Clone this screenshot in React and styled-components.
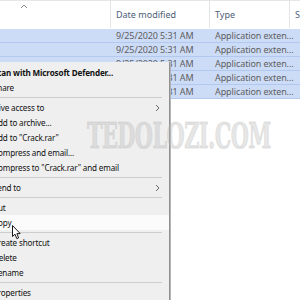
import React from "react";
import styled, { createGlobalStyle } from "styled-components";

const Global = createGlobalStyle`
  html, body {
    margin: 0;
    padding: 0;
    background: #ffffff;
  }
  body {
    font-family: "Noto Sans", "Open Sans", "Liberation Sans", sans-serif;
  }
`;

const Page = styled.div`
  position: relative;
  width: 300px;
  height: 300px;
  overflow: hidden;
  background: #ffffff;
  border-top: 1px solid #e6e6e6;
  box-sizing: border-box;
`;

const List = styled.div`
  display: flex;
  flex-direction: column;
`;

const Header = styled.div`
  display: flex;
  height: 27px;
  align-items: stretch;
  margin-bottom: 1px;
`;

const HeadCell = styled.div`
  width: ${(p) => p.$w}px;
  flex: none;
  display: flex;
  align-items: center;
  padding-left: 5px;
  box-sizing: border-box;
  border-right: 1px solid ${(p) => (p.$divider ? "#e5e5e5" : "transparent")};
  font-size: 9px;
  color: #4d6078;
  position: relative;
  white-space: nowrap;
`;

const SortArrow = styled.svg`
  position: absolute;
  left: 20px;
  top: 3px;
`;

const Row = styled.div`
  display: flex;
  height: 14px;
  align-items: center;
  background: #cddcf6;
  border-bottom: 1px solid #b2c8ee;
  box-sizing: border-box;
`;

const Cell = styled.div`
  width: ${(p) => p.$w}px;
  flex: none;
  padding-left: 5px;
  box-sizing: border-box;
  font-size: 9px;
  letter-spacing: -0.1px;
  color: #5e5e5e;
  white-space: nowrap;
`;

const Menu = styled.div`
  position: absolute;
  left: -40px;
  top: 61px;
  width: 210px;
  height: 260px;
  background: #efefef;
  border-right: 1px solid #8f8f8f;
  box-shadow: 1px 0 0 #b5b5b5;
  padding-top: 3px;
  box-sizing: border-box;
  display: flex;
  flex-direction: column;
`;

const Item = styled.div`
  height: 15px;
  flex: none;
  display: flex;
  align-items: center;
  justify-content: space-between;
  padding-left: 33px;
  padding-right: 9px;
  font-size: 8.1px;
  letter-spacing: -0.15px;
  font-weight: ${(p) => (p.$bold ? 700 : 400)};
  color: #111111;
  background: ${(p) => (p.$hover ? "#fbfbfb" : "transparent")};
  white-space: nowrap;
`;

const Separator = styled.div`
  flex: none;
  height: 1px;
  margin: 2px 7px 2px 0;
  background: #cdcdcd;
`;

const Chevron = styled.svg`
  flex: none;
`;

const Watermark = styled.div`
  position: absolute;
  left: 87px;
  top: 113px;
  font-family: "DejaVu Serif", "Liberation Serif", serif;
  font-weight: 700;
  font-size: 36px;
  letter-spacing: -1px;
  white-space: nowrap;
  color: rgba(185, 185, 185, 0.34);
  -webkit-text-stroke: 1.2px rgba(185, 185, 185, 0.34);
  transform: scaleX(0.58);
  transform-origin: left top;
  pointer-events: none;
`;

const Cursor = styled.svg`
  position: absolute;
  left: 12px;
  top: 224px;
`;

const cols = [111, 99, 80, 40];

const Arrow = () => (
  <Chevron width="5" height="8" viewBox="0 0 5 8">
    <path d="M1 1 L4 4 L1 7" fill="none" stroke="#6a6a6a" strokeWidth="1" />
  </Chevron>
);

const menu = [
  { label: "Scan with Microsoft Defender...", bold: true },
  { label: "Share" },
  "sep",
  { label: "Give access to", sub: true },
  { label: "Add to archive..." },
  { label: 'Add to "Crack.rar"' },
  { label: "Compress and email..." },
  { label: 'Compress to "Crack.rar" and email' },
  "sep",
  { label: "Send to", sub: true },
  "sep",
  { label: "Cut" },
  { label: "Copy", hover: true },
  "sep",
  { label: "Create shortcut" },
  { label: "Delete" },
  { label: "Rename" },
  "sep",
  { label: "Properties" },
];

export default function App() {
  return (
    <>
      <Global />
      <Page>
        <List>
          <Header>
            <HeadCell $w={cols[0]} $divider>
              <SortArrow width="8" height="5" viewBox="0 0 8 5">
                <path d="M1 4 L4 1 L7 4" fill="none" stroke="#8a8a8a" strokeWidth="1" />
              </SortArrow>
            </HeadCell>
            <HeadCell $w={cols[1]} $divider>Date modified</HeadCell>
            <HeadCell $w={cols[2]} $divider>Type</HeadCell>
            <HeadCell $w={cols[3]}>Size</HeadCell>
          </Header>
          {[0, 1, 2, 3, 4].map((i) => (
            <Row key={i}>
              <Cell $w={cols[0]}></Cell>
              <Cell $w={cols[1]}>9/25/2020 5:31 AM</Cell>
              <Cell $w={cols[2]}>Application exten...</Cell>
              <Cell $w={cols[3]}></Cell>
            </Row>
          ))}
        </List>

        <Menu>
          {menu.map((m, i) =>
            m === "sep" ? (
              <Separator key={i} />
            ) : (
              <Item key={i} $bold={m.bold} $hover={m.hover}>
                <span>{m.label}</span>
                {m.sub && <Arrow />}
              </Item>
            )
          )}
        </Menu>

        <Watermark>TEDOLOZI.COM</Watermark>

        <Cursor width="10" height="15" viewBox="0 0 10 15">
          <path
            d="M0.5 0.5 L0.5 11.5 L3 9.2 L4.8 13.6 L6.6 12.8 L4.9 8.6 L8.2 8.6 Z"
            fill="#ffffff"
            stroke="#000000"
            strokeWidth="0.9"
            strokeLinejoin="round"
          />
        </Cursor>
      </Page>
    </>
  );
}
